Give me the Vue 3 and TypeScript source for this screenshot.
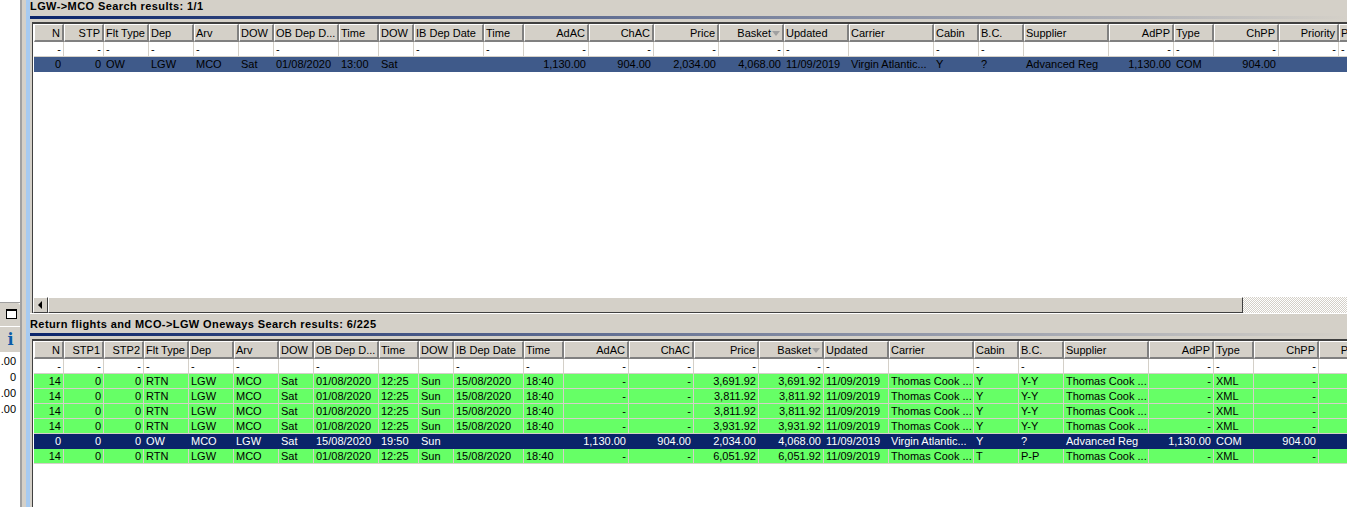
<script setup lang="ts">
interface Col { t: string; w: number; r?: boolean; blank?: boolean }

const tail: Col[] = [
  { t: 'DOW', w: 35, blank: true },
  { t: 'OB Dep D...', w: 65 },
  { t: 'Time', w: 40, blank: true },
  { t: 'DOW', w: 35, blank: true },
  { t: 'IB Dep Date', w: 70 },
  { t: 'Time', w: 40 },
  { t: 'AdAC', w: 65, r: true },
  { t: 'ChAC', w: 65, r: true },
  { t: 'Price', w: 65, r: true },
  { t: 'Basket', w: 65, r: true },
  { t: 'Updated', w: 65 },
  { t: 'Carrier', w: 85, blank: true },
  { t: 'Cabin', w: 45 },
  { t: 'B.C.', w: 45 },
  { t: 'Supplier', w: 85, blank: true },
  { t: 'AdPP', w: 65, r: true },
  { t: 'Type', w: 40 },
  { t: 'ChPP', w: 65, r: true },
  { t: 'Priority', w: 60, r: true },
  { t: 'P', w: 30 },
]
const mid: Col[] = [
  { t: 'Flt Type', w: 45 },
  { t: 'Dep', w: 45 },
  { t: 'Arv', w: 45 },
]

const colsA: Col[] = [{ t: 'N', w: 30, r: true }, { t: 'STP', w: 40, r: true }, ...mid, ...tail]
const colsB: Col[] = [
  { t: 'N', w: 30, r: true },
  { t: 'STP1', w: 40, r: true },
  { t: 'STP2', w: 40, r: true },
  ...mid,
  ...tail,
]

const green = (n: string, price: string, cabin = 'Y', bc = 'Y-Y'): string[] => [
  n, '0', '0', 'RTN', 'LGW', 'MCO', 'Sat', '01/08/2020', '12:25', 'Sun', '15/08/2020', '18:40',
  '-', '-', price, price, '11/09/2019', 'Thomas Cook ...', cabin, bc, 'Thomas Cook ...', '-', 'XML', '-', '', '',
]

const rowsA = [
  {
    kind: 'inactive',
    cells: ['0', '0', 'OW', 'LGW', 'MCO', 'Sat', '01/08/2020', '13:00', 'Sat', '', '', '1,130.00', '904.00',
      '2,034.00', '4,068.00', '11/09/2019', 'Virgin Atlantic...', 'Y', '?', 'Advanced Reg', '1,130.00', 'COM', '904.00', '', ''],
  },
]
const rowsB = [
  { kind: 'green', cells: green('14', '3,691.92') },
  { kind: 'green', cells: green('14', '3,811.92') },
  { kind: 'green', cells: green('14', '3,811.92') },
  { kind: 'green', cells: green('14', '3,931.92') },
  {
    kind: 'active',
    cells: ['0', '0', '0', 'OW', 'MCO', 'LGW', 'Sat', '15/08/2020', '19:50', 'Sun', '', '', '1,130.00', '904.00',
      '2,034.00', '4,068.00', '11/09/2019', 'Virgin Atlantic...', 'Y', '?', 'Advanced Reg', '1,130.00', 'COM', '904.00', '', ''],
  },
  { kind: 'green', cells: green('14', '6,051.92', 'T', 'P-P') },
]

const sideNumbers = ['.00', '0', '.00', '.00']
const panels = [
  { title: 'LGW->MCO Search results: 1/1', cols: colsA, rows: rowsA, first: true },
  { title: 'Return flights and MCO->LGW Oneways Search results: 6/225', cols: colsB, rows: rowsB, first: false },
]
</script>

<template>
  <div class="app">
    <aside class="side">
      <div class="side-top"></div>
      <div class="side-tab">
        <svg width="11" height="10" viewBox="0 0 11 10" class="tab-icon">
          <rect x="0.5" y="0.5" width="10" height="9" fill="#fff" stroke="#000" />
          <rect x="0" y="0" width="11" height="2" fill="#000" />
        </svg>
      </div>
      <div class="side-info"><span class="info">i</span></div>
      <div class="side-nums">
        <div v-for="(n, i) in sideNumbers" :key="i" class="side-num">{{ n }}</div>
      </div>
    </aside>
    <div class="sash"></div>
    <main class="main">
      <section v-for="p in panels" :key="p.title" class="panel" :class="{ first: p.first }">
        <div class="title">{{ p.title }}</div>
        <div class="rule"></div>
        <div class="grid">
          <div class="rows">
            <div class="row head">
              <div v-for="(c, i) in p.cols" :key="i" class="hcell" :class="{ right: c.r }" :style="{ width: c.w + 'px' }">
                <span class="htext">{{ c.t }}</span>
                <span v-if="c.t === 'Basket'" class="sort"></span>
              </div>
            </div>
            <div class="row filter">
              <div v-for="(c, i) in p.cols" :key="i" class="cell" :class="{ right: c.r }" :style="{ width: c.w + 'px' }">
                {{ c.blank ? '' : '-' }}
              </div>
            </div>
            <div v-for="(r, ri) in p.rows" :key="ri" class="row" :class="r.kind">
              <div v-for="(c, i) in p.cols" :key="i" class="cell" :class="{ right: c.r }" :style="{ width: c.w + 'px' }">
                {{ r.cells[i] }}
              </div>
            </div>
          </div>
          <div v-if="p.first" class="scrollbar">
            <div class="sb-btn">
              <svg width="5" height="8" viewBox="0 0 5 8"><polygon points="4,0 4,8 0,4" fill="#000" /></svg>
            </div>
            <div class="sb-thumb"></div>
            <div class="sb-track"></div>
          </div>
        </div>
      </section>
    </main>
  </div>
</template>

<style>
html, body { margin: 0; background: #fff; overflow: hidden; }
</style>

<style scoped>
.app {
  display: flex;
  width: 1347px;
  height: 507px;
  overflow: hidden;
  font-family: "Liberation Sans", Arial, sans-serif;
  font-size: 11px;
  color: #000;
}
.side {
  width: 20px;
  flex: none;
  display: flex;
  flex-direction: column;
  background: #fff;
}
.side-top { height: 303px; border-bottom: 1px solid #a0a0a0; box-sizing: border-box; }
.side-tab {
  height: 24px;
  background: #d4d0c8;
  border-bottom: 1px solid #fff;
  border-top-right-radius: 3px;
  display: flex;
  align-items: center;
  justify-content: center;
  box-sizing: border-box;
  padding: 0 0 2px 2px;
}
.tab-icon { display: block; }
.side-info {
  height: 25px;
  background: #d4d0c8;
  display: flex;
  align-items: center;
  justify-content: center;
  padding-left: 1px;
}
.info {
  font-family: "DejaVu Serif", "Liberation Serif", serif;
  font-weight: 700;
  font-size: 16px;
  color: #0a5ca8;
  line-height: 1;
}
.side-nums { flex: 1; padding: 1px 4px 0 0; }
.side-num { height: 16px; line-height: 16px; text-align: right; }
.sash {
  width: 10px;
  flex: none;
  background: linear-gradient(to right, #a0a0a0 0 2px, #d4d0c8 2px 6px, #a6caf0 6px 10px);
}
.main {
  flex: 1;
  min-width: 0;
  display: flex;
  flex-direction: column;
  background: #d4d0c8;
}
.panel { display: flex; flex-direction: column; flex: 1; min-height: 0; }
.panel.first { flex: none; height: 313px; }
.title {
  height: 16px;
  line-height: 13px;
  font-weight: 700;
  letter-spacing: 0.41px;
  white-space: nowrap;
}
.panel:not(.first) .title {
  height: 20px;
  line-height: 20px;
  border-top: 1px solid #fff;
  box-sizing: border-box;
}
.rule {
  height: 3px;
  background: linear-gradient(to right, #0a246a, #d4d0c8);
  flex: none;
}
.grid {
  flex: 1;
  min-height: 0;
  margin: 3px 0 0 2px;
  background: #fff;
  border-left: 1px solid #404040;
  border-top: 2px solid #404040;
  display: flex;
  flex-direction: column;
  overflow: hidden;
}
.rows { flex: 1; min-height: 0; padding-left: 1px; overflow: hidden; }
.row { display: flex; height: 15px; width: max-content; }
.cell {
  flex: none;
  box-sizing: border-box;
  height: 15px;
  line-height: 14px;
  padding: 0 2px;
  border-right: 1px solid #d4d0c8;
  border-bottom: 1px solid #d4d0c8;
  white-space: nowrap;
  overflow: hidden;
}
.right { text-align: right; }
.head { height: 18px; }
.hcell {
  flex: none;
  box-sizing: border-box;
  height: 18px;
  line-height: 16px;
  padding: 0 3px 0 1px;
  background: #d4d0c8;
  border-top: 1px solid #fff;
  border-left: 1px solid #fff;
  border-right: 2px solid #808080;
  border-bottom: 2px solid #808080;
  position: relative;
  white-space: nowrap;
  overflow: hidden;
}
.hcell.right { padding-right: 2px; }
.sort {
  display: inline-block;
  width: 0;
  height: 0;
  margin-left: 1px;
  vertical-align: 1px;
  border-left: 4px solid transparent;
  border-right: 4px solid transparent;
  border-top: 5px solid #a0a0a0;
}
.green .cell { background: #66ff66; }
.inactive .cell { background: #3f5a8a; border-color: #3f5a8a; color: #000; }
.active .cell { background: #0a246a; border-color: #0a246a; color: #fff; }
.scrollbar { display: flex; height: 16px; flex: none; background: #d4d0c8; }
.sb-btn {
  width: 15px;
  box-sizing: border-box;
  border: 1px solid;
  border-color: #fff #404040 #404040 #fff;
  background: #d4d0c8;
  display: flex;
  align-items: center;
  justify-content: center;
  flex: none;
}
.sb-thumb {
  width: 1195px;
  box-sizing: border-box;
  border: 1px solid;
  border-color: #fff #404040 #404040 #fff;
  background: #d4d0c8;
  flex: none;
}
.sb-track {
  flex: 1;
  background-color: #fff;
  background-image: repeating-conic-gradient(#d4d0c8 0 25%, #fff 0 50%);
  background-size: 2px 2px;
}
</style>
